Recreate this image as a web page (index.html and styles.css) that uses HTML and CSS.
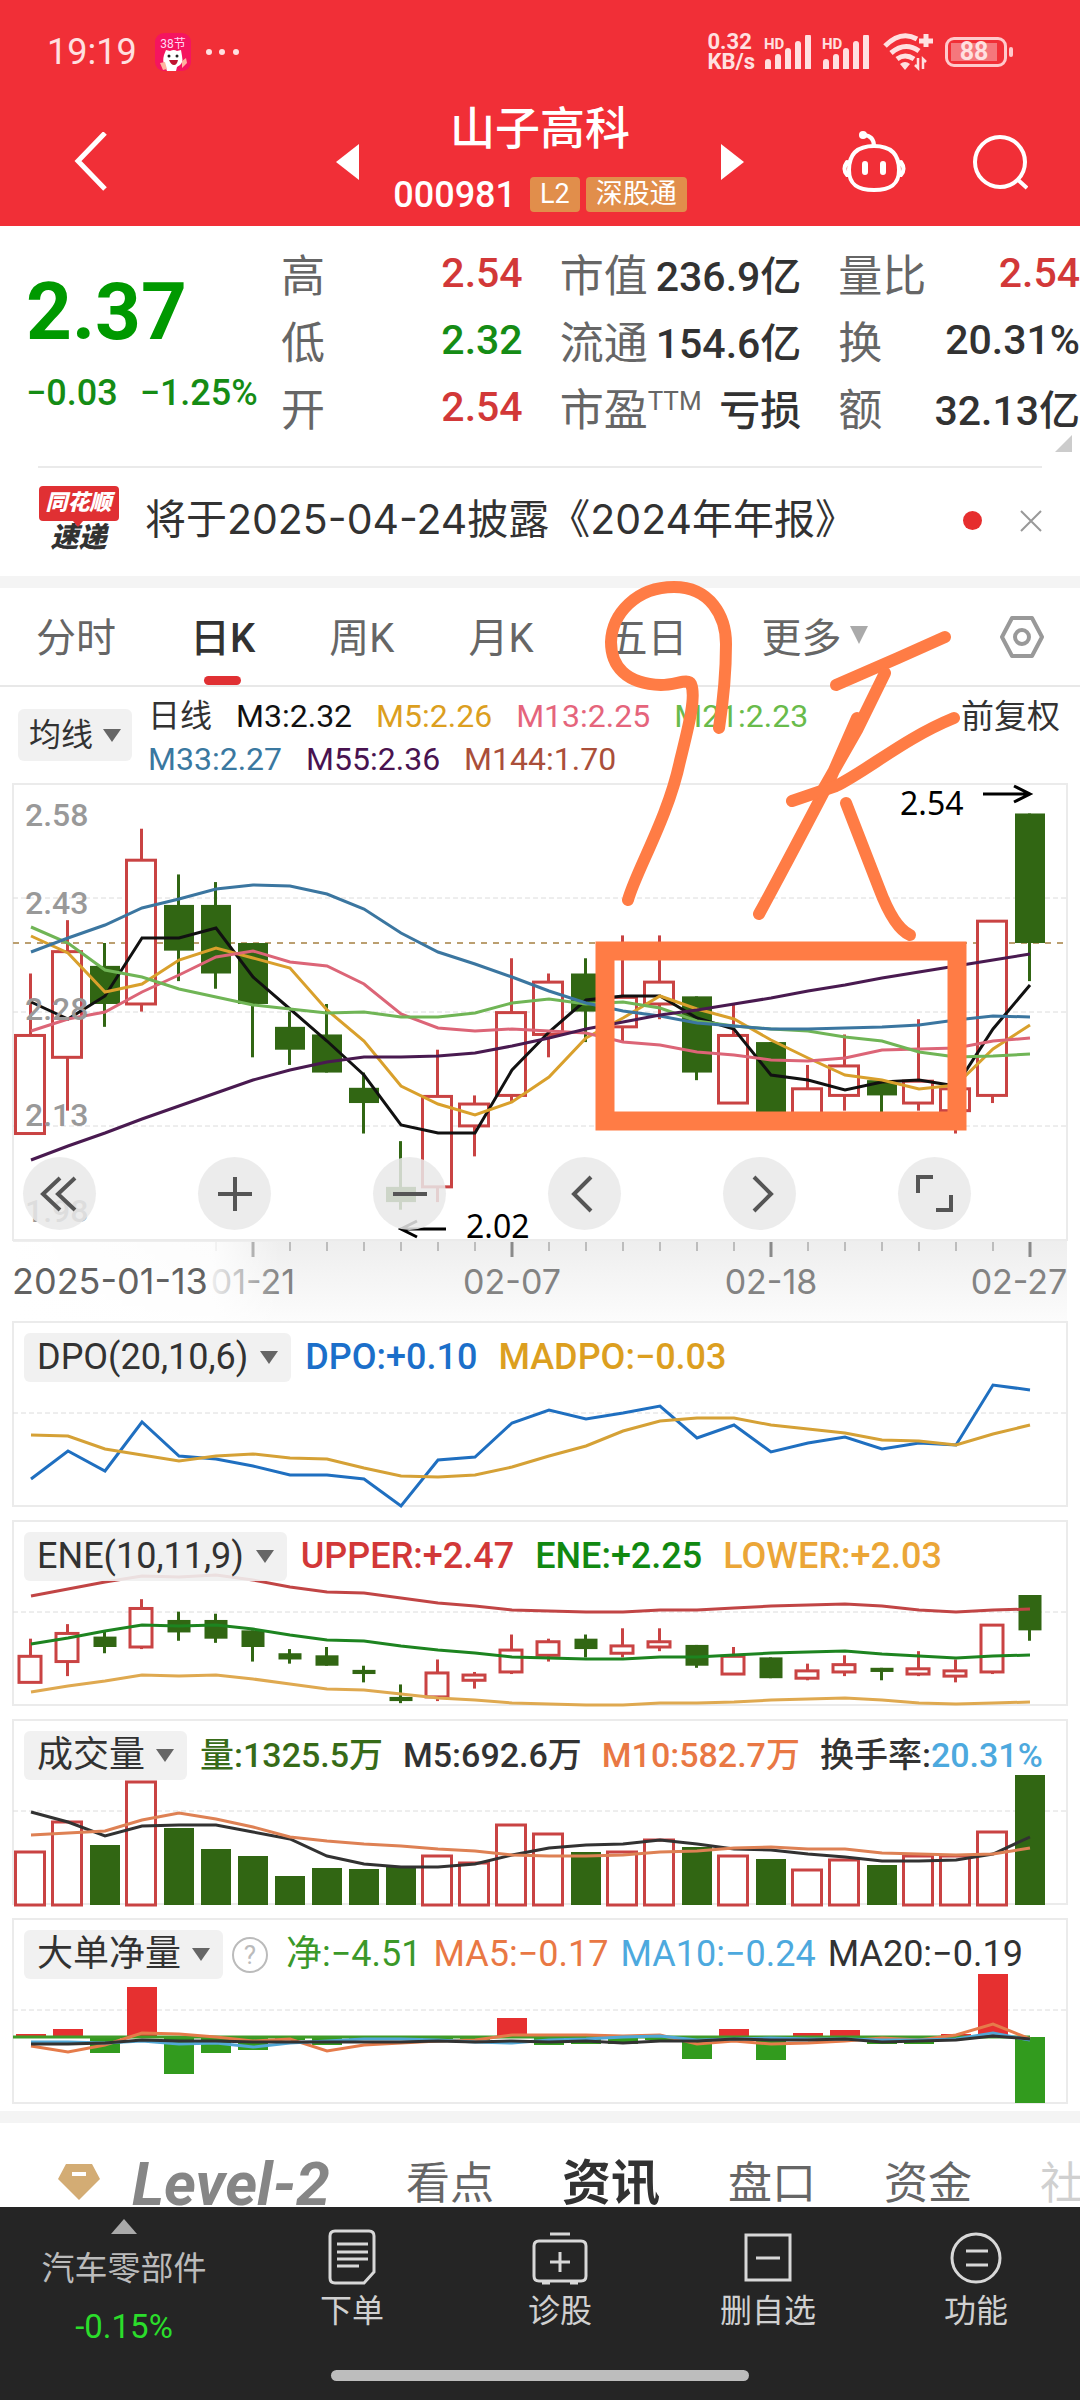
FILE: index.html
```html
<!DOCTYPE html>
<html lang="zh-CN">
<head>
<meta charset="utf-8">
<meta name="viewport" content="width=device-width, initial-scale=1">
<title>山子高科 000981</title>
<link rel="stylesheet" href="styles.css">
</head>
<body>
<header class="header">
  <div class="status">
    <span class="status-time">19:19</span>
    <svg class="status-app" viewBox="0 0 36 38" width="36" height="38" aria-hidden="true">
      <rect width="36" height="38" rx="9" fill="#f5145f"/>
      <text x="18" y="15" text-anchor="middle" font-size="12" fill="#ffd9f6">38节</text>
      <path d="M9 22l2-5 4 1q4-2 7 0l4-1 1 6q2 8-5 11l-1 4h-9l-2-6q-3-3-1-10z" fill="#fff"/>
      <circle cx="14" cy="23" r="1.5" fill="#222"/><circle cx="22" cy="23" r="1.5" fill="#222"/>
      <path d="M14 27h9q-1 5-4 5t-5-5z" fill="#c01432"/>
      <path d="M5 30l5-1 2 7-4 1zM27 28l4-3 1 5-5 5z" fill="#ffb3a0"/>
    </svg>
    <svg class="status-dots" viewBox="0 0 34 8" width="34" height="8" aria-hidden="true"><g fill="#ffe0e0"><circle cx="4" cy="4" r="3"/><circle cx="17" cy="4" r="3"/><circle cx="31" cy="4" r="3"/></g></svg>
    <span class="status-speed">0.32<br>KB/s</span>
    <svg viewBox="0 0 50 34" width="50" height="34" aria-hidden="true"><text x="1" y="14" font-size="15" class="hd">HD</text><path d="M5 27v6M15 22v11M25 16v17M35 9v24M45 2v31" class="bars"/></svg>
    <svg viewBox="0 0 50 34" width="50" height="34" aria-hidden="true"><text x="1" y="14" font-size="15" class="hd">HD</text><path d="M5 27v6M15 22v11M25 16v17M35 9v24M45 2v31" class="bars"/></svg>
    <svg class="wifi" viewBox="0 0 50 38" width="50" height="38" aria-hidden="true"><g fill="none" stroke="#ffe0e0" stroke-width="5"><path d="M2 13Q18-3 34 6M8 20Q22 8 36 18M14 26Q22 20 31 26M43 1v13M36 8h14"/><path stroke-width="2.500" d="M35 25v10l-3-3M40 36V26l3 3"/></g><path d="M17 31q5-4 10 0l-5 6z" fill="#ffe0e0"/></svg>
    <span class="battery"><span class="battery-level">88</span></span>
  </div>
  <div class="titlebar">
    <button class="icon-btn back" aria-label="返回"><svg viewBox="0 0 34 60" width="34" height="60"><path d="M31 1L4 29l27 28" fill="none" stroke="#fff" stroke-width="5"/></svg></button>
    <div class="stock">
      <button class="icon-btn" aria-label="上一只"><svg viewBox="0 0 23 36" width="23" height="36"><path d="M23 0v36L0 18z" fill="#fff"/></svg></button>
      <div class="stock-id">
        <h1>山子高科</h1>
        <div class="stock-code"><span>000981</span><span class="badge">L2</span><span class="badge">深股通</span></div>
      </div>
      <button class="icon-btn" aria-label="下一只"><svg viewBox="0 0 23 36" width="23" height="36"><path d="M0 0v36l23-18z" fill="#fff"/></svg></button>
    </div>
    <div class="title-actions">
      <button class="icon-btn" aria-label="助手"><svg viewBox="0 0 64 62" width="64" height="62"><g fill="none" stroke="#fff" stroke-width="4" stroke-linecap="round"><path d="M22 4q10 1 10 11"/><path d="M32 15c18 0 25 9 25 24 0 15-9 20-25 20S7 54 7 39c0-15 7-24 25-24zM5 31q-5 7 0 13M59 31q5 7 0 13"/><path stroke-width="6" d="M23 33v8M41 33v8"/></g><circle cx="21" cy="4" r="4" fill="#fff"/></svg></button>
      <button class="icon-btn" aria-label="搜索"><svg viewBox="0 0 56 56" width="56" height="56"><g fill="none" stroke="#fff" stroke-width="4"><circle cx="28" cy="28" r="25"/><path d="M45 45l10 9"/></g></svg></button>
    </div>
  </div>
</header>

<main>
  <section class="quote">
    <div class="price">
      <strong class="price-now">2.37</strong>
      <div class="price-change"><span>−0.03</span><span>−1.25%</span></div>
    </div>
    <dl class="stats">
      <div><dt>高</dt><dd class="up">2.54</dd></div>
      <div><dt>市值</dt><dd>236.9亿</dd></div>
      <div><dt>量比</dt><dd class="up">2.54</dd></div>
      <div><dt>低</dt><dd class="down">2.32</dd></div>
      <div><dt>流通</dt><dd>154.6亿</dd></div>
      <div><dt>换</dt><dd>20.31%</dd></div>
      <div><dt>开</dt><dd class="up">2.54</dd></div>
      <div><dt>市盈<sup>TTM</sup></dt><dd>亏损</dd></div>
      <div><dt>额</dt><dd>32.13亿</dd></div>
    </dl>
    <svg class="expand" viewBox="0 0 17 17" width="17" height="17" aria-hidden="true"><path d="M17 0v17H0z" fill="#ccc"/></svg>
  </section>

  <section class="news">
    <div class="news-logo"><span class="news-logo-top">同花顺</span><span class="news-logo-bottom">速递</span></div>
    <a class="news-text" href="#news">将于2025-04-24披露《2024年年报》</a>
    <span class="news-dot"></span>
    <button class="icon-btn" aria-label="关闭"><svg viewBox="0 0 22 22" width="22" height="22"><path d="M1 1l20 20M21 1L1 21" stroke="#999" stroke-width="2"/></svg></button>
  </section>

  <section class="kline">
    <nav class="periods">
      <button>分时</button>
      <button class="active">日K</button>
      <button>周K</button>
      <button>月K</button>
      <button>五日</button>
      <button>更多<i class="caret light"></i></button>
      <button class="settings" aria-label="设置"><svg viewBox="0 0 44 42" width="44" height="42"><g fill="none" stroke="#999" stroke-width="4" stroke-linejoin="round"><path d="M12 2h20l10 19-10 19H12L2 21z"/><circle cx="22" cy="21" r="7"/></g></svg></button>
    </nav>
    <div class="ma-legend">
      <button class="chip small">均线<i class="caret"></i></button>
      <div class="ma-values">
        <span class="c-dark">日线</span><span class="c-black">M3:2.32</span><span class="c-gold">M5:2.26</span><span class="c-pink">M13:2.25</span><span class="c-lime">M21:2.23</span>
        <span class="line-break"></span>
        <span class="c-steel">M33:2.27</span><span class="c-purple">M55:2.36</span><span class="c-brown">M144:1.70</span>
      </div>
      <button class="adjust">前复权</button>
    </div>

    <div class="stack">
      <svg class="chart" viewBox="0 0 1080 537" role="img" aria-label="日K线图">
        <defs>
          <linearGradient id="axis-bg" x1="0" y1="0" x2="0" y2="1"><stop offset="0" stop-color="#eee"/><stop offset="1" stop-color="#fcfcfc"/></linearGradient>
          <linearGradient id="axis-fade" x1="0" y1="0" x2="1" y2="0"><stop offset="0" stop-color="#fff"/><stop offset=".75" stop-color="#fff" stop-opacity=".85"/><stop offset="1" stop-color="#fff" stop-opacity="0"/></linearGradient>
        </defs>
        <rect x="13" y="457" width="1054" height="80" fill="url(#axis-bg)"/>
        <rect class="frame" x="13" y="0" width="1054" height="456"/>
        <path class="grid" d="M13 114H1066M13 228H1066M13 342H1066"/>
        <path class="last-price" d="M13 159H1066"/>
        <g id="kline-series"></g>
        <g class="scale-text"><text x="25" y="42">2.58</text><text x="25" y="130">2.43</text><text x="25" y="236">2.28</text><text x="25" y="342">2.13</text><text x="25" y="438">1.98</text></g>
        <g class="mark-text"><text x="900" y="31">2.54</text><text x="466" y="454">2.02</text></g>
        <g class="mark-arrow"><path d="M983 10h46M1014 2l16 8-16 8M446 445h-45M417 437l-16 8 16 8"/></g>
        <g id="axis-ticks"></g>
        <g class="date-text"><text x="253" y="510">01-21</text><text x="512" y="510">02-07</text><text x="771" y="510">02-18</text><text x="1019" y="510">02-27</text></g>
        <rect x="10" y="458" width="270" height="79" fill="url(#axis-fade)"/>
        <text class="date-first" x="12" y="510">2025-01-13</text>
      </svg>
      <div class="controls">
        <button aria-label="最早"><svg viewBox="0 0 73 73"><path d="M37 21L20 37l17 16M52 21L35 37l17 16"/></svg></button>
        <button aria-label="放大"><svg viewBox="0 0 73 73"><path d="M20 37h34M37 20v34"/></svg></button>
        <button aria-label="缩小"><svg viewBox="0 0 73 73"><path d="M20 37h34"/></svg></button>
        <button aria-label="向左"><svg viewBox="0 0 73 73"><path d="M43 20L26 37l17 17"/></svg></button>
        <button aria-label="向右"><svg viewBox="0 0 73 73"><path d="M31 20l17 17-17 17"/></svg></button>
        <button aria-label="全屏"><svg viewBox="0 0 73 73"><path d="M35 20H20v16M53 38v15H38"/></svg></button>
      </div>
    </div>

    <svg class="sketch" viewBox="0 0 1080 560" aria-hidden="true">
      <g fill="none" stroke="#ff7c45" stroke-width="12" stroke-linecap="round" stroke-linejoin="round">
        <path d="M719 140C724 108 726 78 726 56C726 28 710 -1 674 -1C636 -1 612 26 611 54C611 78 626 96 661 97C676 97 688 90 691 96C696 108 690 133 680 173C668 230 636 283 628 312"/>
        <path d="M836 97L898 70L945 49"/>
        <path d="M885 85L857 142L824 200M857 130L828 196C805 240 782 284 759 326"/>
        <path d="M954 130C905 150 868 182 836 198L792 213"/>
        <path d="M846 215L879 300Q894 340 910 347"/>
      </g>
      <rect x="605" y="363" width="352" height="170" fill="none" stroke="#ff7c45" stroke-width="19"/>
    </svg>
  </section>

  <section class="panels">
    <div class="stack">
      <svg class="chart" viewBox="0 0 1080 187" role="img" aria-label="DPO"><rect class="frame" x="13" y="1" width="1054" height="184"/><path class="grid" d="M13 92H1066"/><g id="dpo-series"></g></svg>
      <div class="panel-head"><button class="chip">DPO(20,10,6)<i class="caret"></i></button><span class="c-blue">DPO:+0.10</span><span class="c-gold">MADPO:−0.03</span></div>
    </div>
    <div class="stack">
      <svg class="chart" viewBox="0 0 1080 187" role="img" aria-label="ENE"><rect class="frame" x="13" y="1" width="1054" height="184"/><path class="grid" d="M13 92H1066"/><g id="ene-series"></g></svg>
      <div class="panel-head"><button class="chip">ENE(10,11,9)<i class="caret"></i></button><span class="up">UPPER:+2.47</span><span class="c-green">ENE:+2.25</span><span class="c-amber">LOWER:+2.03</span></div>
    </div>
    <div class="stack">
      <svg class="chart" viewBox="0 0 1080 187" role="img" aria-label="成交量"><rect class="frame" x="13" y="1" width="1054" height="184"/><path class="grid" d="M13 92H1066"/><g id="volume-series"></g></svg>
      <div class="panel-head compact"><button class="chip">成交量<i class="caret"></i></button><span class="c-forest">量:1325.5万</span><span class="c-dark">M5:692.6万</span><span class="c-orange">M10:582.7万</span><span class="c-dark">换手率:<b class="c-sky">20.31%</b></span></div>
    </div>
    <div class="stack">
      <svg class="chart" viewBox="0 0 1080 187" role="img" aria-label="大单净量"><rect class="frame" x="13" y="1" width="1054" height="184"/><path class="grid" d="M13 92H1066"/><g id="net-series"></g></svg>
      <div class="panel-head tight"><button class="chip">大单净量<i class="caret"></i></button><button class="help" aria-label="说明">?</button><span class="c-leaf">净:−4.51</span><span class="c-orange">MA5:−0.17</span><span class="c-sky">MA10:−0.24</span><span class="c-dark">MA20:−0.19</span></div>
    </div>
  </section>

  <nav class="info-tabs">
    <a class="level2" href="#level2"><svg viewBox="0 0 42 38" width="42" height="38" aria-hidden="true"><path d="M8 1h26l8 15-21 21L0 16z" fill="#d3ac74"/><path d="M14 11h14" stroke="#fff" stroke-width="4"/></svg><em>Level-2</em></a>
    <a href="#view">看点</a>
    <a class="active" href="#info">资讯</a>
    <a href="#book">盘口</a>
    <a href="#funds">资金</a>
    <a class="faded" href="#club">社</a>
  </nav>
</main>

<footer class="dock">
  <div class="dock-items">
    <a class="sector" href="#sector"><svg viewBox="0 0 26 15" width="26" height="15" aria-hidden="true"><path d="M13 0l13 15H0z" fill="#aaa"/></svg><span>汽车零部件</span><span class="sector-change">-0.15%</span></a>
    <button><svg viewBox="0 0 56 56"><path d="M11 2h34q5 0 5 5v36L40 54H11q-5 0-5-5V7q0-5 5-5zM13 15h31M13 23h31M13 30h31M13 37h22"/></svg>下单</button>
    <button><svg viewBox="0 0 56 56"><path d="M18 5h20M7 12h42q5 0 5 5v30q0 5-5 5H7q-5 0-5-5V17q0-5 5-5zM28 23v20M18 33h20M10 54h8M38 54h8"/></svg>诊股</button>
    <button><svg viewBox="0 0 56 56"><path d="M6 6h44v45H6zM16 29h24"/></svg>删自选</button>
    <button><svg viewBox="0 0 56 56"><circle cx="28" cy="29" r="24"/><path d="M18 22h22M18 36h22"/></svg>功能</button>
  </div>
  <div class="home-bar"></div>
</footer>
<script src="charts.js"></script>
</body>
</html>
```

FILE: styles.css
```css
* { box-sizing: border-box; }
body {
  margin: 0;
  background: #fff;
  color: #323232;
  font-family: Roboto, "Noto Sans CJK SC", sans-serif;
  font-size: 36px;
}
button {
  margin: 0;
  padding: 0;
  border: 0;
  background: none;
  color: inherit;
  font: inherit;
  white-space: nowrap;
}
a { color: inherit; text-decoration: none; }
svg { display: block; flex: none; }
.icon-btn { display: flex; flex: none; }

/* header */
.header { background: #f12f37; color: #fff; }
.status {
  display: flex;
  align-items: center;
  height: 97px;
  padding: 6px 73px 0 47px;
  color: #ffe0e0;
  gap: 8px;
}
.status-time { font-size: 36px; margin-right: 10px; }
.status-dots { margin-left: 6px; margin-right: auto; }
.status-speed { font-size: 22px; line-height: 20px; font-weight: 700; }
.hd { fill: #ffe0e0; font-weight: 700; }
.bars { stroke: #ffe0e0; stroke-width: 6px; stroke-linecap: round; fill: none; }
.wifi { margin: 0 4px; }
.battery {
  position: relative;
  width: 62px;
  height: 30px;
  padding: 3px;
  border: 3px solid #ffc9cb;
  border-radius: 9px;
}
.battery::after {
  content: "";
  position: absolute;
  right: -9px;
  top: 7px;
  width: 4px;
  height: 10px;
  border-radius: 2px;
  background: #ffc9cb;
}
.battery-level {
  display: block;
  width: 46px;
  height: 18px;
  background: #f5777c;
  font-size: 25px;
  line-height: 18px;
  font-weight: 700;
  text-align: center;
}
.titlebar {
  display: grid;
  grid-template-columns: 1fr auto 1fr;
  align-items: center;
  height: 129px;
  padding: 0 52px 2px 74px;
}
.stock { display: flex; justify-content: space-between; align-items: center; width: 408px; margin-right: 22px; }
.stock-id { text-align: center; }
h1 { margin: 0; font-size: 45px; line-height: 66px; font-weight: 500; }
.stock-code { display: flex; align-items: center; gap: 6px; height: 63px; font-size: 36px; font-weight: 500; }
.stock-code .badge:nth-child(2) { margin-left: 8px; }
.badge { padding: 0 10px; border-radius: 4px; background: #e18e4b; font-size: 27px; line-height: 35px; font-weight: 400; }
.title-actions { display: flex; justify-content: flex-end; align-items: center; gap: 66px; }

/* quote */
.quote {
  position: relative;
  display: flex;
  justify-content: space-between;
  height: 240px;
  padding: 13px 0 0 26px;
}
.price { flex: none; width: 240px; color: #009900; }
.price-now { display: block; margin-top: 18px; font-size: 80px; line-height: 110px; font-weight: 700; }
.price-change { display: flex; gap: 22px; font-size: 36px; line-height: 52px; font-weight: 500; color: #158c15; white-space: nowrap; }
.stats {
  flex: 1;
  display: grid;
  grid-template-columns: repeat(3, minmax(0, 1fr));
  column-gap: 37px;
  margin: 0 0 0 15px;
  grid-auto-rows: 67px;
}
.stats div { display: flex; justify-content: space-between; align-items: center; white-space: nowrap; }
dt { font-size: 44px; color: #666; }
dt sup { font-size: 26px; line-height: 1px; }
dd { margin: 0; font-size: 41px; font-weight: 500; }
.up { color: #d23838; }
.down { color: #158c15; }
.expand { position: absolute; right: 8px; bottom: 14px; }

.news {
  display: flex;
  align-items: center;
  height: 110px;
  margin: 0 38px;
  padding-bottom: 3px;
  border-top: 2px solid #eaeaea;
}
.news-logo { display: flex; flex-direction: column; align-items: center; width: 81px; font-style: italic; font-weight: 900; }
.news-logo-top { position: relative; width: 80px; height: 35px; border-radius: 4px; background: #e03033; color: #fff; font-size: 22px; line-height: 34px; text-align: center; }
.news-logo-top::after { content: ""; position: absolute; left: 34px; bottom: -6px; border: 5px solid transparent; border-top: 6px solid #e03033; border-bottom: 0; }
.news-logo-bottom { font-size: 28px; line-height: 34px; }
.news-text { flex: 1; margin-left: 26px; font-family: Inter, "Noto Sans CJK SC", sans-serif; font-size: 41px; line-height: 60px; padding-bottom: 3px; white-space: nowrap; }
.news-dot { width: 19px; height: 19px; margin-right: 38px; border-radius: 50%; background: #e62e2e; }

/* chart area */
.kline { position: relative; border-top: 12px solid #f4f4f4; }
.periods {
  display: flex;
  align-items: stretch;
  gap: 74px;
  height: 99px;
  padding: 0 36px;
  border-bottom: 2px solid #e8e8e8;
  font-size: 40px;
  color: #666;
}
.periods button { display: flex; align-items: center; gap: 8px; padding-bottom: 4px; }
.periods .active { position: relative; color: #323232; font-weight: 500; }
.periods .active::after { content: ""; position: absolute; left: 14px; bottom: 0; width: 37px; height: 9px; border-radius: 5px; background: #e03033; }
.periods .settings { margin-left: auto; padding-bottom: 0; }
.caret { flex: none; border: 9px solid transparent; border-top: 13px solid #666; border-bottom: 0; }
.caret.light { border-top: 18px solid #aaa; }
.ma-legend { display: flex; align-items: flex-start; height: 97px; padding: 8px 20px 0 18px; font-size: 32px; line-height: 43px; }
.chip { display: flex; align-items: center; gap: 12px; height: 49px; padding: 0 13px; border-radius: 6px; background: rgba(240, 240, 240, .9); }
.chip.small { height: 52px; margin-top: 14px; padding: 0 11px; font-size: 32px; gap: 10px; font-weight: 400; }
.ma-values { flex: 1; display: flex; flex-wrap: wrap; column-gap: 24px; margin-left: 16px; white-space: nowrap; }
.line-break { flex-basis: 100%; }
.adjust { font-size: 33px; line-height: 43px; font-weight: 400; }

.stack { display: grid; }
.stack > * { grid-area: 1 / 1; min-width: 0; }
.chart { width: 100%; height: auto; overflow: visible; }
.frame { fill: none; stroke: #ebebeb; stroke-width: 2px; }
.grid { stroke: #dcdcdc; stroke-width: 1px; stroke-dasharray: 5 3; }
.last-price { stroke: #bb9f70; stroke-width: 2px; stroke-dasharray: 6 6; }
.scale-text { font-size: 32px; font-weight: 500; fill: #999; }
.mark-text { font: 32px "Noto Sans", sans-serif; fill: #000; }
.mark-arrow { fill: none; stroke: #000; stroke-width: 3px; }
.date-text, .date-first { font-family: Inter, sans-serif; font-size: 34px; fill: #838383; }
.date-text { text-anchor: middle; }
.date-first { font-size: 36px; fill: #626262; }
.sketch { position: absolute; left: 0; top: 0; width: 100%; overflow: visible; pointer-events: none; }

.controls { display: flex; justify-content: space-between; align-self: end; padding: 0 109px 91px 23px; }
.controls button { width: 73px; height: 73px; border-radius: 50%; background: rgba(233, 233, 233, .85); }
.controls path { fill: none; stroke: #555; stroke-width: 4px; }

.panels { display: flex; flex-direction: column; gap: 12px; padding-bottom: 6px; }
.panel-head { display: flex; align-items: center; align-self: start; gap: 21px; padding: 12px 24px 0; font-size: 36px; line-height: 49px; font-weight: 500; white-space: nowrap; }
.panel-head .chip { font-weight: 400; margin-right: -7px; }
.panel-head.compact { font-size: 34px; gap: 20px; }
.panel-head.compact .chip, .panel-head.tight .chip { font-size: 36px; gap: 11px; }
.panel-head.tight { font-weight: 400; gap: 12px; }
.panel-head.tight .chip { margin-right: -3px; }
.help { width: 36px; height: 36px; margin-right: 6px; border: 2px solid #bbb; border-radius: 50%; color: #bbb; font-size: 26px; line-height: 32px; }
b { font-weight: 500; }

.c-dark { color: #323232; }
.c-black { color: #111; }
.c-gold { color: #dc9f1f; }
.c-pink { color: #e5657c; }
.c-lime { color: #69bb4b; }
.c-steel { color: #3a78a0; }
.c-purple { color: #491350; }
.c-brown { color: #aa4f3a; }
.c-blue { color: #1b6fca; }
.c-green { color: #118911; }
.c-amber { color: #eba637; }
.c-forest { color: #376b18; }
.c-orange { color: #e97844; }
.c-sky { color: #4da9de; }
.c-leaf { color: #3b9829; }

/* information tabs */
.info-tabs {
  display: flex;
  align-items: center;
  gap: 68px;
  height: 96px;
  padding: 38px 0 0 58px;
  border-top: 12px solid #f4f4f4;
  overflow: hidden;
  font-size: 44px;
  line-height: 46px;
  color: #666;
  white-space: nowrap;
}
.level2 { display: flex; align-items: center; gap: 32px; }
.level2 svg { margin-bottom: 4px; }
.level2 em { padding-right: 8px; font-size: 61px; font-weight: 700; color: #868686; }
.info-tabs .active { font-size: 49px; font-weight: 700; color: #323232; }
.faded { opacity: .3; }

/* dock */
.dock { background: #252525; color: #d0d0d0; padding-bottom: 19px; }
.dock-items { display: grid; grid-template-columns: 248fr 208fr 208fr 208fr 208fr; height: 163px; font-size: 32px; line-height: 46px; }
.dock-items button { display: flex; flex-direction: column; align-items: center; padding-top: 22px; gap: 3px; }
.dock-items button svg { width: 56px; height: 56px; fill: none; stroke: #d8d8d8; stroke-width: 3px; }
.sector { display: flex; flex-direction: column; align-items: center; padding-top: 12px; line-height: 58px; font-size: 33px; color: #bbb; }
.sector span:first-of-type { margin-top: 6px; }
.sector-change { color: #2bdd2b; }
.home-bar { width: 418px; height: 11px; margin: 0 auto; border-radius: 6px; background: #bdbdbd; }
```

FILE: charts.js
```js
const NS = 'http://www.w3.org/2000/svg';
const RED = '#c94343', GREEN = '#316613';
const px = i => 31 + 37 * i;

function add(id, tag, attrs) {
  const el = document.createElementNS(NS, tag);
  for (const k in attrs) el.setAttribute(k, attrs[k]);
  document.getElementById(id).appendChild(el);
}
function line(id, ys, color) {
  add(id, 'polyline', { points: ys.map((y, i) => px(i) + ',' + y).join(' '), fill: 'none', stroke: color, 'stroke-width': 3 });
}
function bar(id, i, top, bottom, w, hollow, color) {
  if (hollow) add(id, 'rect', { x: px(i) - w / 2 - 0.5, y: top + 1, width: w - 1, height: Math.max(bottom - top - 1, 2), fill: '#fff', stroke: color, 'stroke-width': 3 });
  else add(id, 'rect', { x: px(i) - w / 2, y: top, width: w, height: Math.max(bottom - top, 3), fill: color });
}

// [kind, body top, body bottom, high, low]
const candles = [
  ['r',2.25,2.12,2.33,2.12],['r',2.36,2.22,2.40,2.15],['g',2.34,2.29,2.37,2.26],['r',2.48,2.29,2.52,2.28],
  ['g',2.42,2.36,2.46,2.32],['g',2.42,2.33,2.45,2.31],['g',2.37,2.29,2.37,2.22],['g',2.26,2.23,2.28,2.21],
  ['g',2.25,2.20,2.29,2.20],['g',2.18,2.16,2.20,2.12],['g',2.05,2.03,2.11,2.02],['r',2.17,2.05,2.23,2.03],
  ['r',2.16,2.13,2.17,2.09],['r',2.28,2.17,2.35,2.16],['r',2.32,2.25,2.33,2.22],['g',2.33,2.28,2.35,2.24],
  ['r',2.30,2.26,2.38,2.24],['r',2.32,2.29,2.38,2.27],['g',2.30,2.20,2.30,2.19],['r',2.25,2.16,2.29,2.16],
  ['g',2.24,2.14,2.24,2.14],['r',2.18,2.14,2.21,2.13],['r',2.21,2.17,2.25,2.15],['g',2.19,2.17,2.19,2.13],
  ['r',2.19,2.16,2.27,2.15],['r',2.18,2.15,2.23,2.12],['r',2.40,2.17,2.40,2.16],['g',2.54,2.37,2.54,2.32]
];
function drawCandles(id, top, max, scale, w) {
  const y = p => top + (max - p) * scale;
  candles.forEach(([k, a, b, hi, lo], i) => {
    const color = k === 'r' ? RED : GREEN;
    add(id, 'path', { d: `M${px(i) - 0.5} ${y(hi)}V${y(lo)}`, stroke: color, 'stroke-width': 3 });
    bar(id, i, y(a), y(b), w, k === 'r', color);
  });
}

drawCandles('kline-series', -1, 2.58, 762, 30);
line('kline-series', [218,235,212,154,154,144,193,225,257,291,341,349,349,286,248,216,212,212,234,245,291,296,306,298,296,302,245,201], '#111');
line('kline-series', [152,169,208,200,176,164,174,184,226,257,302,320,331,318,293,254,234,212,225,235,256,274,291,296,305,301,265,241], '#d9a02c');
line('kline-series', [247,235,228,208,191,173,167,178,182,200,230,244,247,245,247,249,258,261,268,271,276,277,274,266,265,264,257,254], '#dc6577');
line('kline-series', [143,159,186,193,205,213,221,225,229,228,233,233,229,219,215,220,218,224,237,242,245,247,253,257,268,273,272,270], '#70b556');
line('kline-series', [168,154,141,124,115,105,101,102,110,125,149,168,180,193,207,219,227,232,239,242,245,245,244,243,241,236,232,233], '#3b76a0');
line('kline-series', [376,362,349,335,322,309,296,286,278,273,273,272,269,262,254,245,238,231,226,220,214,207,201,194,188,182,176,170], '#491a50');

for (let i = 5; i < 28; i++) {
  const major = [6, 13, 20, 27].includes(i);
  add('axis-ticks', 'path', { d: `M${px(i)} 458v${major ? 15 : 9}`, stroke: major ? '#8a8a8a' : '#bdbdbd', 'stroke-width': major ? 3 : 2 });
}

line('dpo-series', [158,130,150,101,135,138,145,154,154,158,185,139,136,102,89,98,92,85,117,104,131,122,116,128,122,124,64,69], '#1f6fc0');
line('dpo-series', [114,115,128,134,140,135,133,137,138,147,155,156,154,146,135,125,110,100,97,97,104,108,112,119,120,124,113,104], '#d5a136');

drawCandles('ene-series', 75, 2.54, 208, 23);
line('ene-series', [76,69,62,56,57,55,60,67,72,73,78,83,86,90,91,92,92,90,90,88,86,85,84,86,90,92,90,89], '#c14545');
line('ene-series', [124,118,111,105,106,105,109,115,120,121,126,130,133,137,138,139,139,137,137,135,133,132,131,134,136,138,136,135], '#1d8420');
line('ene-series', [172,166,161,155,156,155,159,164,169,170,174,178,180,183,184,185,185,183,183,182,180,179,178,180,183,184,183,182], '#dfa950');

[132,102,126,62,109,130,137,157,149,150,147,136,143,105,114,133,132,120,128,136,140,150,140,146,136,136,112,56]
  .forEach((y, i) => { const r = 'rrgrgggggggrrrrgrrgrgrrgrrrg'[i] === 'r'; bar('volume-series', i, y, 186, 30, r, r ? RED : GREEN); });
line('volume-series', [93,103,117,107,106,106,113,120,137,145,148,148,145,136,129,126,125,121,125,130,131,135,138,142,142,141,135,118], '#323232');
line('volume-series', [116,114,112,101,94,100,108,118,122,125,127,130,132,136,137,137,136,133,132,129,128,130,130,134,135,136,135,129], '#de8154');

[116,111,135,69,156,135,132,121,127,121,121,121,121,100,127,126,126,121,141,111,142,115,112,126,126,116,56,185]
  .forEach((y, i) => bar('net-series', i, Math.min(y, 119), Math.max(y, 119), 30, false, y < 119 ? '#e63030' : '#329b1e'));
add('net-series', 'path', { d: 'M13 119H1030', stroke: '#3f9b28', 'stroke-width': 3 });
line('net-series', [128,134,127,115,116,119,123,121,133,127,125,123,122,117,117,117,118,117,126,123,126,125,123,120,122,117,106,121], '#e57b4a');
line('net-series', [124,124,125,123,126,125,129,125,123,121,121,122,124,125,122,121,119,118,122,121,120,121,121,122,122,121,115,122], '#51a7d6');
line('net-series', [126,126,125,122,123,123,124,124,124,124,124,123,124,123,124,123,125,123,123,121,122,122,121,124,123,122,118,121], '#323232');
```
